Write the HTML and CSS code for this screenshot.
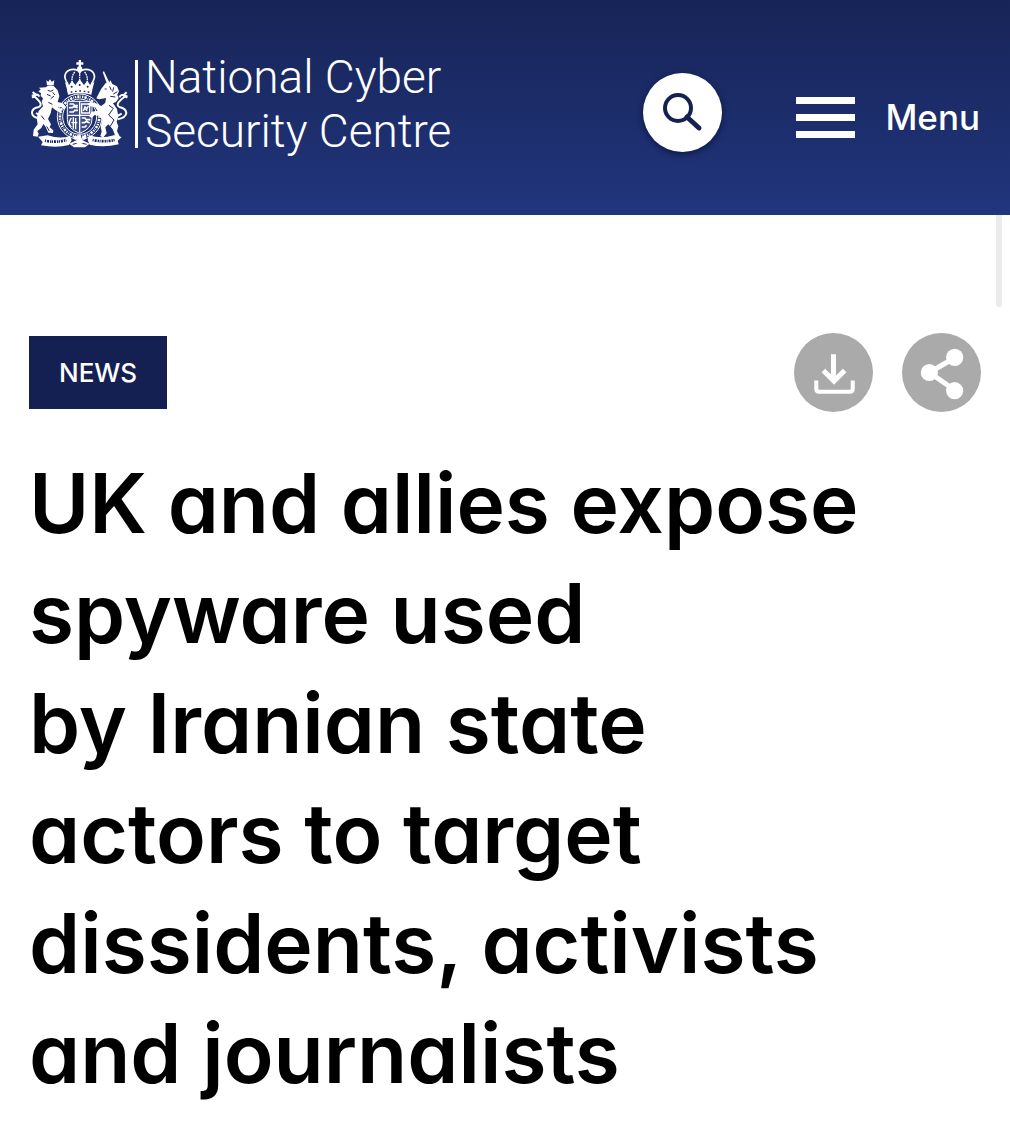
FILE: index.html
```html
<!DOCTYPE html>
<html lang="en">
<head>
  <meta charset="UTF-8" />
  <meta name="viewport" content="width=device-width, initial-scale=1" />
  <title>UK and allies expose spyware - National Cyber Security Centre</title>
  <link rel="stylesheet" href="styles.css">
</head>
<body>
  <header class="site-header">
    <a class="logo" href="#">
      <svg class="crest" viewBox="25 40 300 268" aria-hidden="true">
        <!-- crown -->
        <g fill="none" stroke="#fff" stroke-width="5">
          <path d="M142 114C122 88 138 70 158 70q14 0 19 10 5-10 19-10c20 0 36 18 16 44"/>
          <path d="M177 78v36M162 78q-12 16-6 36M192 78q12 16 6 36" stroke-width="4" stroke-dasharray="5 2"/>
        </g>
        <g fill="#fff">
          <circle cx="177" cy="69" r="8"/>
          <path d="M174 42h7v7h7v7h-7v8h-7v-8h-7v-7h7z"/>
          <path d="M133 108l13 8 8-12 10 13 13-17 13 17 10-13 8 12 13-8-7 26q-37-10-74 0z"/>
          <path d="M139 132q38-10 76 0l-3 14q-35-8-70 0z"/>
        </g>
        <g fill="#1a2761">
          <circle cx="153" cy="122" r="3"/><circle cx="177" cy="117" r="3"/><circle cx="201" cy="122" r="3"/>
          <path d="M150 136h5v4h-5zM163 134h5v4h-5zM176 133h5v4h-5zM189 134h5v4h-5zM201 136h5v4h-5z"/>
        </g>
        <!-- garter and shield -->
        <g fill="none" stroke="#fff">
          <ellipse cx="177" cy="212" rx="67" ry="68" stroke-width="3"/>
          <ellipse cx="177" cy="212" rx="59" ry="60" stroke-width="8" stroke-dasharray="4 3 7 3 2 3"/>
          <ellipse cx="177" cy="212" rx="51" ry="53" stroke-width="3"/>
          <path d="M140 166h74v54q0 28-37 42-37-14-37-42z" fill="#3c4a85" stroke-width="3"/>
          <path d="M177 166v94M140 208h74" stroke-width="4"/>
          <path d="M146 174h12l4 5h10M145 185h10l5-4 11 5M146 198h12l4-5h10" stroke-width="5"/>
          <path d="M183 174h24v27h-24zM188 195l5-13 6 6 4-8M190 186l10 8" stroke-width="4"/>
          <path d="M158 214v34M152 216q-12 16 0 27M165 216v34M152 230h18" stroke-width="4"/>
          <path d="M183 216h10l4 5h12M183 230h9l5-4 10 5M183 243h10l5-5" stroke-width="5"/>
        </g>
        <!-- lion -->
        <g fill="#fff">
          <path d="M77 103l6 4 5-7 5 7 8-4-2 15H79z"/>
          <path d="M75 124q8-9 24-4l12 13 5 17-5 18 16 4 8 12-4 7-8-7-12-2 12 11-2 8-17-9-10-8-4 18-8 17 9 16-4 9 11 9-1 8-14-1-8-17-7-9-6 12-12 9 4 8-3 9-14-2 2-19 12-16-3-19 6-21 13-14-4-13 4-11-7-7 1-8-8-6 7-5-5-6z"/>
        </g>
        <path d="M57 217q-23-3-23-17 1-14 18-16 14-5 4-18-8-9-19-18 15-7 19 4M46 201l13 8M36 138l10 9-12 8" fill="none" stroke="#fff" stroke-width="6"/>
        <path d="M81 133l9 3 8-4M79 145l11 5M90 158l10-8M96 139l7 8M83 169l12 6M62 209l9 12M78 241l8 14" fill="none" stroke="#1a2761" stroke-width="3"/>
        <!-- unicorn -->
        <g fill="#fff">
          <path d="M246 78l4-2 17 36-8 2z"/>
          <path d="M241 130l14-19 9 1 5-9 6 11 14 7 6 15-5 10 4 11-8 11-9 4 12 17 4 22-5 17 5 13-4 14 9 18-9 9-9-5 2-12-6-15-13-15-9 9 4 18-11 13-8-5 4-13-3-16 5-20-9-11-14-3-9 9-8-5 8-14 18-3-7-10-19-4-3-7 7-5 20 5 13 7 12-10 2-14-20 4-9-3z"/>
        </g>
        <path d="M291 220q25-5 26-19-2-14-19-17-13-6-2-18 8-9 20-16-15-8-20 4M303 203l-13 7M318 139l-10 9 12 7" fill="none" stroke="#fff" stroke-width="6"/>
        <path d="M252 129h6M267 121l5 12M279 124l-3 13M290 137l-12 7M269 151l15 2M265 178l14 10M276 190l-12 17 16 15-12 20" fill="none" stroke="#1a2761" stroke-width="3"/>
        <!-- motto scroll -->
        <g fill="#fff">
          <path d="M52 272l29-4q37 12 67 2l5 13-8 14q-38 10-84 1l5-10z"/>
          <path d="M201 282l4-14q38 12 74 0l24 5-12 11 3 11q-46 11-87 1z"/>
          <path d="M145 293l22-10 9-18 10 18 21 10-14 11h-33z"/>
          <circle cx="164" cy="275" r="6"/><circle cx="190" cy="275" r="6"/>
        </g>
        <path d="M73 284q33 7 64-2M216 282q33 7 66 0" fill="none" stroke="#1a2761" stroke-width="8" stroke-dasharray="3 3 6 3 4 2"/>
        <path d="M156 295l12-3M185 292l13 3" stroke="#1a2761" stroke-width="3"/>
      </svg>
      <span class="logo-text">National Cyber<br>Security Centre</span>
    </a>
    <div class="header-tools">
      <button class="search" type="button" aria-label="Search">
        <svg viewBox="0 0 40 40" aria-hidden="true">
          <circle cx="15" cy="16" r="13" fill="none" stroke="#172151" stroke-width="4"/>
          <path d="M24 25l12 11" stroke="#172151" stroke-width="5" stroke-linecap="round"/>
        </svg>
      </button>
      <button class="menu" type="button">
        <span class="bars"><i></i><i></i><i></i></span>
        <span>Menu</span>
      </button>
    </div>
  </header>
  <div class="scroll-thumb"></div>

  <main>
    <div class="article-bar">
      <a class="tag" href="#">NEWS</a>
      <div class="actions">
        <button class="round" type="button" aria-label="Download">
          <svg viewBox="0 0 78 78" fill="none" stroke="#fff" stroke-width="5" aria-hidden="true">
            <path d="M39 21v25M29 37l10.500 10.500 10.500-10.500"/>
            <path d="M22 47v8q0 3 3 3h30q3 0 3-3v-8" stroke-width="4"/>
          </svg>
        </button>
        <button class="round" type="button" aria-label="Share">
          <svg viewBox="0 0 78 78" fill="#fff" aria-hidden="true">
            <path d="M53 24L27 39l26 18" fill="none" stroke="#fff" stroke-width="5"/>
            <circle cx="52" cy="24" r="8.500"/>
            <circle cx="27" cy="39" r="8.500"/>
            <circle cx="52" cy="57" r="8.500"/>
          </svg>
        </button>
      </div>
    </div>
    <h1>UK and allies expose<br>spyware used<br>by&nbsp;Iranian state<br>actors to target<br>dissidents, activists<br>and journalists</h1>
  </main>
</body>
</html>
```
FILE: styles.css
```css
* {
  box-sizing: border-box;
}
body {
  margin: 0;
  background: #fff;
  color: #000;
  font-family: Inter, "Open Sans", sans-serif;
  font-feature-settings: "cv11";
}
button {
  border: 0;
  padding: 0;
  background: none;
  color: inherit;
  font: inherit;
  font-feature-settings: inherit;
  cursor: pointer;
}
.site-header {
  display: flex;
  justify-content: space-between;
  align-items: center;
  padding: 50px 30px 57px 29px;
  background: linear-gradient(#172456, #21357d);
  color: #fff;
}
.logo {
  display: flex;
  align-items: center;
  color: #fff;
  text-decoration: none;
}
.crest {
  width: 100px;
  height: 90px;
}
.logo-text {
  margin-left: 6px;
  padding-left: 10px;
  background: linear-gradient(#fff, #fff) left center / 3px 88px no-repeat;
  font-family: Roboto, "Liberation Sans", sans-serif;
  font-weight: 300;
  font-size: 46px;
  line-height: 54px;
}
.header-tools {
  display: flex;
  align-items: flex-start;
  gap: 74px;
  padding-top: 16px;
}
.search {
  display: flex;
  align-items: center;
  justify-content: center;
  width: 79px;
  height: 79px;
  border-radius: 50%;
  background: #fff;
  box-shadow: 0 2px 6px rgba(5, 12, 50, 0.7);
}
.search svg {
  width: 40px;
  height: 40px;
}
.menu {
  display: flex;
  align-items: center;
  gap: 30px;
  padding-top: 24px;
  font-weight: 500;
  font-size: 35px;
  line-height: 40px;
}
.bars {
  display: flex;
  flex-direction: column;
  gap: 10px;
  width: 59px;
}
.bars i {
  height: 7px;
  background: #fff;
}
.scroll-thumb {
  position: absolute;
  top: 215px;
  right: 8px;
  width: 6px;
  height: 92px;
  border-radius: 0 0 3px 3px;
  background: #ebebeb;
}
main {
  padding: 118px 29px 24px;
}
.article-bar {
  display: flex;
  justify-content: space-between;
  align-items: center;
}
.tag {
  padding: 0 30px;
  background: #152052;
  color: #fff;
  font-weight: 500;
  font-size: 26px;
  line-height: 73px;
  text-decoration: none;
}
.actions {
  display: flex;
  gap: 29px;
}
.round {
  width: 79px;
  height: 79px;
  border-radius: 50%;
  background: #aaa;
}
.round svg {
  display: block;
}
h1 {
  margin: 37px 0 0;
  font-weight: 600;
  font-size: 82px;
  line-height: 110px;
}
```
